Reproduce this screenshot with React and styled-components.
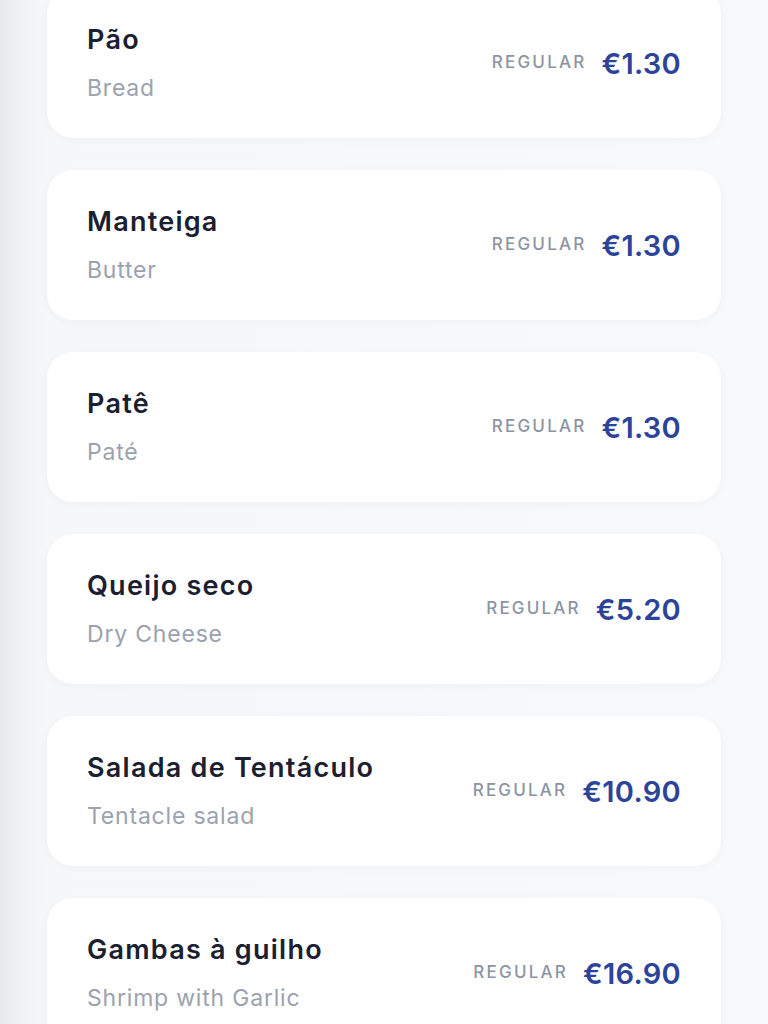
import React from "react";
import styled, { createGlobalStyle } from "styled-components";

const GlobalStyle = createGlobalStyle`
  html, body {
    margin: 0;
    padding: 0;
  }
  body {
    background: linear-gradient(to right, #e7e8ea 0px, #f1f2f4 22px, #f6f7f9 48px, #f8f9fb 100%);
    font-family: Inter, "Noto Sans", sans-serif;
    overflow: hidden;
  }
`;

const Page = styled.div`
  height: 1024px;
  overflow: hidden;
`;

const List = styled.div`
  display: flex;
  flex-direction: column;
  gap: 32px;
  padding: 0 47px;
  margin-top: -12px;
`;

const Card = styled.div`
  height: 150px;
  box-sizing: border-box;
  background: #ffffff;
  border-radius: 26px;
  box-shadow: 0 2px 10px rgba(20, 30, 60, 0.035);
  display: flex;
  align-items: center;
  justify-content: space-between;
  padding: 0 40px;
`;

const Names = styled.div`
  display: flex;
  flex-direction: column;
  gap: 16px;
`;

const Title = styled.div`
  font-size: 27px;
  line-height: 34px;
  font-weight: 600;
  color: #1b2030;
  letter-spacing: 1.25px;
`;

const Subtitle = styled.div`
  font-size: 23px;
  line-height: 30px;
  font-weight: 400;
  color: #9ba2ae;
  letter-spacing: 0.8px;
`;

const PriceBox = styled.div`
  display: flex;
  align-items: center;
  gap: 15px;
`;

const Size = styled.span`
  font-size: 17px;
  font-weight: 500;
  letter-spacing: 2.2px;
  color: #8c94a3;
  margin-top: -3px;
`;

const Price = styled.span`
  font-size: 29px;
  font-weight: 600;
  color: #2d4399;
  letter-spacing: 0.3px;
`;

const items = [
  ["Pão", "Bread", "€1.30"],
  ["Manteiga", "Butter", "€1.30"],
  ["Patê", "Paté", "€1.30"],
  ["Queijo seco", "Dry Cheese", "€5.20"],
  ["Salada de Tentáculo", "Tentacle salad", "€10.90"],
  ["Gambas à guilho", "Shrimp with Garlic", "€16.90"],
];

export default function App() {
  return (
    <Page>
      <GlobalStyle />
      <List>
        {items.map(([pt, en, price]) => (
          <Card key={pt}>
            <Names>
              <Title>{pt}</Title>
              <Subtitle>{en}</Subtitle>
            </Names>
            <PriceBox>
              <Size>REGULAR</Size>
              <Price>{price}</Price>
            </PriceBox>
          </Card>
        ))}
      </List>
    </Page>
  );
}
